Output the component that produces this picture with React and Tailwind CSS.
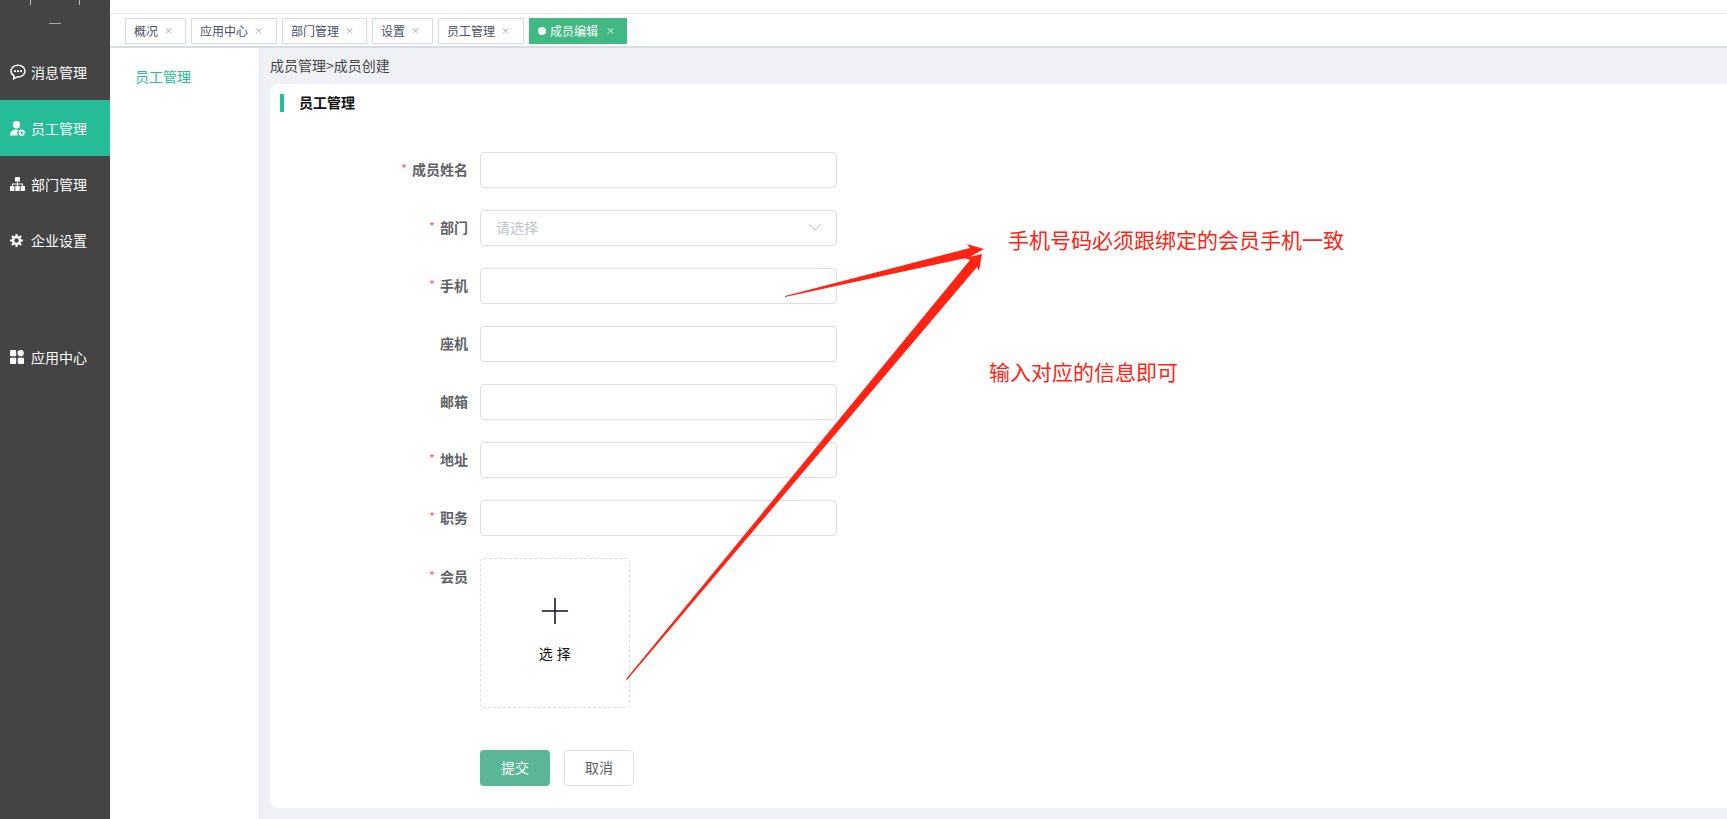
import React from 'react';

const font = { fontFamily: '"Noto Sans CJK SC", "Noto Sans", sans-serif' };

const menu = [
  { label: '消息管理', icon: 'chat' },
  { label: '员工管理', icon: 'user', active: true },
  { label: '部门管理', icon: 'org' },
  { label: '企业设置', icon: 'gear' },
  { label: '应用中心', icon: 'apps', mt: 'mt-[61px]' },
];

const tabs = [
  { label: '概况', w: 'w-[61px]' },
  { label: '应用中心', w: 'w-[86px]' },
  { label: '部门管理', w: 'w-[85px]' },
  { label: '设置', w: 'w-[61px]' },
  { label: '员工管理', w: 'w-[86px]' },
];

const fields = [
  { label: '成员姓名', required: true },
  { label: '部门', required: true, select: true },
  { label: '手机', required: true },
  { label: '座机' },
  { label: '邮箱' },
  { label: '地址', required: true },
  { label: '职务', required: true },
];

const MenuIcon = ({ type }) => {
  if (type === 'chat') {
    return (
      <svg width="16" height="16" viewBox="0 0 16 16" fill="none">
        <path d="M8 1.200C4.100 1.200 1 3.700 1 7c0 2.100 1.200 3.900 3.100 4.900L3.700 14.800l3.300-1.900c.3 0 .7.100 1 .1 3.900 0 7-2.700 7-6S11.900 1.200 8 1.200z" stroke="#fff" strokeWidth="1.500" />
        <circle cx="5" cy="7.200" r="1.100" fill="#fff" />
        <circle cx="8" cy="7.200" r="1.100" fill="#fff" />
        <circle cx="11" cy="7.200" r="1.100" fill="#fff" />
      </svg>
    );
  }
  if (type === 'user') {
    return (
      <svg width="15" height="15" viewBox="0 0 15 15" fill="#fff">
        <circle cx="6.500" cy="3.800" r="3.700" />
        <path d="M0 14.500c0-3.500 2.500-6 6-6 1 0 1.800.2 2.500.5-.9.800-1.400 1.900-1.400 3 0 1 .3 1.800.8 2.500H0z" />
        <circle cx="11.700" cy="11.700" r="2.200" fill="none" stroke="#fff" strokeWidth="1.800" />
      </svg>
    );
  }
  if (type === 'org') {
    return (
      <svg width="15" height="14" viewBox="0 0 15 14" fill="#fff">
        <rect x="5" y="0" width="5" height="4.500" />
        <rect x="7" y="4.500" width="1" height="2.500" />
        <rect x="2" y="6.500" width="11" height="1" />
        <rect x="2" y="7" width="1" height="2" />
        <rect x="12" y="7" width="1" height="2" />
        <rect x="7" y="7" width="1" height="2" />
        <rect x="0" y="9" width="4.400" height="5" />
        <rect x="5.300" y="9" width="4.400" height="5" />
        <rect x="10.600" y="9" width="4.400" height="5" />
      </svg>
    );
  }
  if (type === 'gear') {
    return (
      <svg width="13" height="13" viewBox="0 0 13 13" fill="none">
        <circle cx="6.500" cy="6.500" r="3.500" stroke="#fff" strokeWidth="2.400" />
        <path d="M6.500 0v2.500M6.500 10.500V13M0 6.500h2.500M10.500 6.500H13M1.900 1.900l1.800 1.800M9.300 9.300l1.800 1.800M1.900 11.100l1.800-1.800M9.300 3.700l1.800-1.800" stroke="#fff" strokeWidth="2" />
      </svg>
    );
  }
  return (
    <svg width="14" height="14" viewBox="0 0 14 14" fill="#fff">
      <rect x="0" y="0" width="6.200" height="6.200" rx="1" />
      <circle cx="10.700" cy="3.200" r="3.100" />
      <rect x="0" y="7.800" width="6.200" height="6.200" rx="1" />
      <rect x="7.800" y="7.800" width="6.200" height="6.200" rx="1" />
    </svg>
  );
};

const Label = ({ text, required }) => (
  <div className="w-[210px] pr-[12px] pb-[2px] flex justify-end items-center gap-[5px] text-[14px] leading-[20px] font-semibold text-[#606266]">
    {required && <span className="text-[#f56c6c] text-[13px] leading-[14px] font-normal">*</span>}
    <span>{text}</span>
  </div>
);

export default function App() {
  return (
    <div style={font} className="relative flex h-[819px] w-[1727px] overflow-hidden bg-white">
      {/* left menu */}
      <aside className="w-[110px] shrink-0 bg-[#444444] flex flex-col pt-[44px] relative">
        <div className="absolute left-[30px] top-0 w-px h-[5px] bg-[#bbbbbb]" />
        <div className="absolute left-[79px] top-0 w-px h-[5px] bg-[#bbbbbb]" />
        <div className="absolute left-[49px] top-[23px] w-[12px] h-px bg-[#aaaaaa]" />
        {menu.map((m) => (
          <div
            key={m.label}
            className={`h-[56px] ${m.mt || ''} ${m.active ? 'bg-[#26bc98]' : ''} flex items-center pl-[10px] text-white text-[14px]`}
          >
            <span className="w-[21px] flex items-center">
              <MenuIcon type={m.icon} />
            </span>
            {m.label}
          </div>
        ))}
      </aside>

      <div className="flex-1 flex flex-col min-w-0">
        <div className="h-[14px] border-b border-[#e4e6ec]" />
        {/* tabs */}
        <div className="h-[34px] border-b-2 border-[#d8dce5] flex items-start gap-[5px] pl-[15px] pt-[4px]">
          {tabs.map((t) => (
            <div
              key={t.label}
              className={`${t.w} h-[26px] border border-[#d8dce5] flex items-center pl-[8px] text-[12px] text-[#495060]`}
            >
              <span>{t.label}</span>
              <span className="ml-[6px] text-[9px] text-[#9a9ea8]">×</span>
            </div>
          ))}
          <div className="w-[98px] h-[26px] bg-[#42b983] flex items-center pl-[9px] text-[12px] text-white">
            <span className="w-[8px] h-[8px] rounded-full bg-white mr-[4px]" />
            <span>成员编辑</span>
            <span className="ml-[8px] text-[9px]">×</span>
          </div>
        </div>

        <div className="flex-1 flex min-h-0">
          {/* sub menu */}
          <div className="w-[150px] shrink-0 border-r border-[#e4e6ec] pl-[25px] pt-[18px] text-[14px] leading-[20px] text-[#26bc98]">
            员工管理
          </div>

          {/* main */}
          <main className="flex-1 min-w-0 bg-[#f0f1f5] pl-[10px] pb-[11px] flex flex-col">
            <div className="h-[36px] pb-[2px] flex items-center text-[14px] text-[#444444]">成员管理&gt;成员创建</div>
            <div className="flex-1 bg-white rounded-tl-[8px] rounded-bl-[8px]">
              <div className="flex items-center h-[18px] mt-[10px] ml-[10px]">
                <span className="w-[4px] h-[18px] bg-[#26bc98]" />
                <span className="ml-[15px] mb-[2px] text-[14px] font-semibold text-[#111111]">员工管理</span>
              </div>

              <div className="mt-[40px] flex flex-col gap-[22px]">
                {fields.map((f) => (
                  <div key={f.label} className="flex items-center">
                    <Label text={f.label} required={f.required} />
                    <div className="w-[357px] h-[36px] border border-[#dcdfe6] rounded-[4px] flex items-center justify-between pl-[15px] pr-[15px] pb-[2px] text-[14px] text-[#c0c4cc]">
                      {f.select && (
                        <>
                          <span>请选择</span>
                          <svg width="12" height="7" viewBox="0 0 12 7" fill="none">
                            <path d="M.5.5 6 6 11.500.5" stroke="#c0c4cc" />
                          </svg>
                        </>
                      )}
                    </div>
                  </div>
                ))}

                {/* upload */}
                <div className="flex items-start">
                  <div className="pt-[8px]">
                    <Label text="会员" required />
                  </div>
                  <div className="w-[150px] h-[150px] border border-dashed border-[#dcdfe6] rounded-[4px] flex flex-col items-center text-[#111111]">
                    <svg className="mt-[39px]" width="26" height="26" viewBox="0 0 26 26">
                      <path d="M13 0v26M0 13h26" stroke="#111122" strokeWidth="1.500" />
                    </svg>
                    <span className="mt-[19px] text-[14px] leading-[20px] tracking-[0.5px]">选 择</span>
                  </div>
                </div>
              </div>

              {/* buttons */}
              <div className="mt-[42px] ml-[210px] flex gap-[14px] text-[14px]">
                <div className="w-[70px] h-[36px] pb-[2px] rounded-[4px] bg-[#5cb698] text-white flex items-center justify-center">提交</div>
                <div className="w-[70px] h-[36px] pb-[2px] rounded-[4px] border border-[#dcdfe6] text-[#606266] flex items-center justify-center">取消</div>
              </div>
            </div>
          </main>
        </div>
      </div>

      {/* red annotations drawn over the page */}
      <svg className="absolute left-0 top-0 pointer-events-none" width="1727" height="819" viewBox="0 0 1727 819">
        <polygon points="785,296 970,248 967,244 984,249 962,261 966,258 785,297" fill="#ff2314" />
        <polygon points="626,679 970,260 965,258 982,254 979,271 977,267 627,680" fill="#ff2314" />
      </svg>
      <div className="absolute left-[1008px] top-[225px] text-[21px] leading-[28px] text-[#ff2314]">手机号码必须跟绑定的会员手机一致</div>
      <div className="absolute left-[989px] top-[357px] text-[21px] leading-[28px] text-[#ff2314]">输入对应的信息即可</div>
    </div>
  );
}
